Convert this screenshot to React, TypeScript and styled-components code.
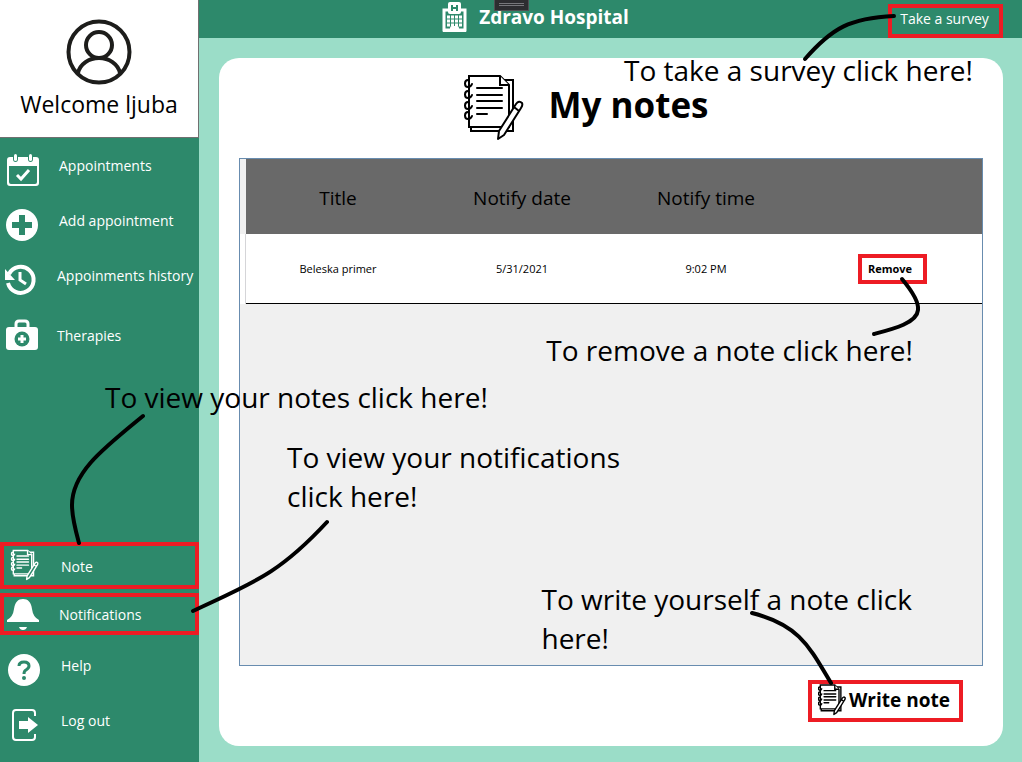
import React from 'react';
import styled, { createGlobalStyle, css } from 'styled-components';

const GREEN = '#2d896b';
const MINT = '#9bddc8';
const RED = '#ed1c24';

const GlobalStyle = createGlobalStyle`
  *, *::before, *::after { box-sizing: border-box; }
  body {
    margin: 0;
    background: ${MINT};
    color: #000;
    font-family: "Segoe UI", "Open Sans", "Noto Sans", sans-serif;
    font-size: 14px;
  }
  button { font: inherit; color: inherit; background: none; cursor: pointer; }
`;

const Page = styled.div`
  position: relative;
  display: grid;
  grid-template-columns: 199px 1fr;
  min-height: 100vh;
`;

const Sidebar = styled.aside`
  display: flex;
  flex-direction: column;
  background: ${GREEN};
`;

const Profile = styled.div`
  display: flex;
  flex-direction: column;
  align-items: center;
  height: 138px;
  padding-top: 19px;
  background: #fff;
  border-right: 1px solid #707070;
  border-bottom: 1px solid #707070;
`;

const Welcome = styled.div`
  font-size: 23px;
  line-height: 38px;
`;

const Nav = styled.nav`
  flex: 1;
  display: flex;
  flex-direction: column;
  justify-content: space-between;
  padding-bottom: 14px;
`;

const NavGroup = styled.div<{ $gap?: number }>`
  display: flex;
  flex-direction: column;
  gap: ${(p) => p.$gap ?? 0}px;
`;

const NavItem = styled.a<{ $inset: number; $height?: number; $marked?: boolean }>`
  display: flex;
  align-items: center;
  gap: ${(p) => p.$inset - 44}px;
  height: ${(p) => p.$height ?? 55}px;
  color: #fff;
  line-height: 20px;
  white-space: nowrap;
  text-decoration: none;
  ${(p) =>
    p.$marked &&
    css`
      padding-top: 2px;
      border: 4px solid ${RED};
      svg { margin-left: -4px; }
    `}
`;

const Main = styled.div`
  display: flex;
  flex-direction: column;
  min-width: 0;
`;

const Header = styled.header`
  display: flex;
  align-items: flex-end;
  height: 38px;
  padding-right: 19px;
  background: ${GREEN};
  color: #fff;
`;

const Brand = styled.div`
  flex: 1;
  display: flex;
  align-items: center;
  justify-content: center;
  gap: 12px;
  height: 38px;
  padding: 0 16px 4px 0;
  font-size: 19px;
  line-height: 26px;
  font-weight: 700;
`;

const BrandName = styled.span`
  position: relative;
`;

const DebugTab = styled.span`
  position: absolute;
  top: -4px;
  left: 15px;
  width: 35px;
  height: 11px;
  background: #2d2d30;
  border: 1px solid #505054;
  border-top: 0;
  &::after {
    content: "";
    position: absolute;
    inset: 3px 4px 4px;
    border-top: 1px solid #77777b;
    border-bottom: 1px solid #77777b;
  }
`;

const SurveyButton = styled.button`
  width: 115px;
  height: 34px;
  padding: 0 2px 6px 0;
  border: 4px solid ${RED};
`;

const Card = styled.main`
  flex: 1;
  display: flex;
  flex-direction: column;
  margin: 20px 19px 16px 20px;
  padding: 0 20px 24px;
  background: #fff;
  border-radius: 20px;
`;

const TitleBar = styled.div`
  display: flex;
  align-items: center;
  justify-content: center;
  gap: 25px;
  height: 100px;
  padding-right: 50px;
`;

const Title = styled.h1`
  margin: 0;
  padding-bottom: 6px;
  font-size: 35px;
  line-height: 48px;
  font-weight: 700;
`;

const NotesPanel = styled.section`
  flex: 1;
  background: #f0f0f0;
  border: 1px solid #688caf;
`;

const NotesTable = styled.table`
  width: 100%;
  table-layout: fixed;
  border-collapse: separate;
  border-spacing: 0;
  text-align: center;
`;

const GutterCol = styled.col`
  width: 6px;
`;

const HeadCell = styled.th`
  height: 75px;
  padding: 2px 0 0;
  background: #696969;
  font-size: 19px;
  font-weight: 400;
`;

const HeadGutter = styled.td`
  padding: 0;
`;

const Cell = styled.td`
  height: 70px;
  padding: 0;
  background: #fff;
  border-bottom: 1px solid #000;
  font-size: 11px;
`;

const Gutter = styled.td`
  padding: 0;
  background: #fff;
  border-right: 1px solid #d5d5d8;
`;

const RemoveButton = styled.button`
  width: 69px;
  height: 30px;
  margin-left: 4px;
  padding: 0 4px 0 0;
  border: 4px solid ${RED};
  font-weight: 700;
`;

const Actions = styled.div`
  display: flex;
  justify-content: flex-end;
  padding: 14px 20px 0 0;
`;

const WriteButton = styled.button`
  display: flex;
  align-items: center;
  gap: 3px;
  width: 155px;
  height: 42px;
  padding: 0 0 2px 6px;
  border: 4px solid ${RED};
  font-size: 19px;
  font-weight: 700;
  white-space: nowrap;
`;

const Arrows = styled.svg<{ $side: 'left' | 'right' }>`
  position: absolute;
  top: 0;
  ${(p) => p.$side}: 0;
  fill: none;
  stroke: #000;
  stroke-width: 4;
  stroke-linecap: round;
  pointer-events: none;
`;

const Callout = styled.p<{ $top: number; $left?: number; $right?: number }>`
  position: absolute;
  top: ${(p) => p.$top}px;
  ${(p) => (p.$left !== undefined ? `left: ${p.$left}px;` : `right: ${p.$right}px;`)}
  margin: 0;
  font-size: 28px;
  line-height: 39px;
  white-space: nowrap;
  pointer-events: none;
`;

function NotepadShape({ paper, width = 2 }: { paper: string; width?: number }) {
  return (
    <g fill={paper} stroke="currentColor" strokeWidth={width}>
      <path d="M7 5H49V56H7Z" />
      <path d="M5 1H36L45 10V52H5Z" />
      <path d="M36 1V10H45" />
      <path
        fill="none"
        strokeLinecap="round"
        d="M13 13H38M13 20H38M13 26H38M13 33H38M13 39H23M4 5C0 5 0 12 4 12Q7 12 8 9M4 16C0 16 0 23 4 23Q7 23 8 20M4 27C0 27 0 34 4 34Q7 34 8 31M4 37C0 37 0 44 4 44Q7 44 8 41"
      />
      <path strokeLinejoin="round" d="M34 64L35 56L52 29Q55 25 58 28Q59 30 57 33L40 60ZM50 32L55 36" />
    </g>
  );
}

function NotepadIcon({ width, height, stroke }: { width: number; height: number; stroke?: number }) {
  return (
    <svg width={width} height={height} viewBox="0 0 60 66" aria-hidden="true">
      <NotepadShape paper="#fff" width={stroke} />
    </svg>
  );
}

function NavIcon({ children }: { children: React.ReactNode }) {
  return (
    <svg width="44" height="44" viewBox="0 0 44 44" fill="#fff" color="#fff" aria-hidden="true">
      {children}
    </svg>
  );
}

const CalendarIcon = () => (
  <NavIcon>
    <path
      fillRule="evenodd"
      d="M10 13H13V15Q13 18 15.500 18T18 15V13H28V15Q28 18 30.500 18T33 15V13H36Q39 13 39 16V39Q39 42 36 42H10Q7 42 7 39V16Q7 13 10 13ZM9 22V38Q9 40 11 40H35Q37 40 37 38V22Z"
    />
    <rect x="14" y="10" width="3" height="7" rx="1.500" />
    <rect x="29" y="10" width="3" height="7" rx="1.500" />
    <path d="M17 31L21 35L29 26" fill="none" stroke="#fff" strokeWidth="3" />
  </NavIcon>
);

const PlusIcon = () => (
  <NavIcon>
    <circle cx="22" cy="26" r="16" />
    <path d="M22 16V36M12 26H32" stroke={GREEN} strokeWidth="6" />
  </NavIcon>
);

const HistoryIcon = () => (
  <NavIcon>
    <path d="M9 20A13 13 0 1 1 8 29" fill="none" stroke="#fff" strokeWidth="4" />
    <path d="M5 15V26H15Z" />
    <path d="M20 18V26L26 30" fill="none" stroke="#fff" strokeWidth="3" />
  </NavIcon>
);

const KitIcon = () => (
  <NavIcon>
    <path d="M16 14V10Q16 7 19 7H25Q28 7 28 10V14" fill="none" stroke="#fff" strokeWidth="3" />
    <rect x="6" y="13" width="32" height="23" rx="3" />
    <circle cx="22" cy="25" r="7.500" fill={GREEN} />
    <path d="M22 21V29M18 25H26" stroke="#fff" strokeWidth="3" />
  </NavIcon>
);

const NoteIcon = () => (
  <NavIcon>
    <g transform="translate(11 5) scale(.46)">
      <NotepadShape paper={GREEN} width={3} />
    </g>
  </NavIcon>
);

const BellIcon = () => (
  <NavIcon>
    <path d="M7 29V27Q13 24 14 16C15 9 18 6 23 6S31 9 32 16Q33 24 39 27V29ZM19 34H27Q26 37 23 37T19 34Z" />
  </NavIcon>
);

const HelpIcon = () => (
  <NavIcon>
    <circle cx="24" cy="26" r="16" />
    <path d="M19 22Q19 18 24 18T29 22Q29 24 26 26Q24 27 24 30" fill="none" stroke={GREEN} strokeWidth="3" />
    <circle cx="24" cy="34" r="2" fill={GREEN} />
  </NavIcon>
);

const LogoutIcon = () => (
  <NavIcon>
    <path d="M35 17V14Q35 11 32 11H16Q13 11 13 14V38Q13 41 16 41H32Q35 41 35 38V35" fill="none" stroke="#fff" strokeWidth="2" />
    <path d="M19 22H28V18L38 26L28 34V30H19Z" />
  </NavIcon>
);

function HospitalIcon() {
  return (
    <svg width="25" height="31" viewBox="0 0 25 31" fill="#fff" aria-hidden="true">
      <rect x="6" y="0" width="13" height="12" rx="2" />
      <path d="M10 3V9M15 3V9M10 6H15" stroke={GREEN} strokeWidth="2" />
      <path d="M7 8H2V28H23V8H18" fill="none" stroke="#fff" strokeWidth="3" />
      <path d="M5 15H21M5 19H21M5 23H21" stroke="#fff" strokeWidth="3" strokeDasharray="3 1" />
      <path d="M8 30V26Q8 24 10 24H15Q17 24 17 26V30Z" />
      <path d="M1 28H9V30H1ZM16 28H24V30H16Z" />
    </svg>
  );
}

function UserIcon() {
  return (
    <svg width="66" height="66" viewBox="0 0 66 66" fill="none" stroke="#1d1d1b" strokeWidth="4" aria-hidden="true">
      <circle cx="33" cy="33" r="30.500" />
      <circle cx="33" cy="26" r="13" />
      <path d="M12 54C14 45 23 39 33 39S52 45 54 54" />
    </svg>
  );
}

const notes = [{ title: 'Beleska primer', date: '5/31/2021', time: '9:02 PM' }];

export default function App() {
  return (
    <>
      <GlobalStyle />
      <Page>
        <Sidebar>
          <Profile>
            <UserIcon />
            <Welcome>Welcome ljuba</Welcome>
          </Profile>
          <Nav>
            <NavGroup>
              <NavItem href="#appointments" $inset={59}><CalendarIcon />Appointments</NavItem>
              <NavItem href="#add" $inset={59}><PlusIcon />Add appointment</NavItem>
              <NavItem href="#history" $inset={57}><HistoryIcon />Appoinments history</NavItem>
              <NavItem href="#therapies" $inset={57} $height={65}><KitIcon />Therapies</NavItem>
            </NavGroup>
            <NavGroup $gap={4}>
              <NavItem href="#notes" $inset={61} $height={47} $marked><NoteIcon />Note</NavItem>
              <NavItem href="#notifications" $inset={59} $height={42} $marked><BellIcon />Notifications</NavItem>
              <NavGroup>
                <NavItem href="#help" $inset={61} $height={54}><HelpIcon />Help</NavItem>
                <NavItem href="#logout" $inset={61}><LogoutIcon />Log out</NavItem>
              </NavGroup>
            </NavGroup>
          </Nav>
        </Sidebar>

        <Main>
          <Header>
            <Brand>
              <HospitalIcon />
              <BrandName>
                Zdravo Hospital
                <DebugTab />
              </BrandName>
            </Brand>
            <SurveyButton type="button">Take a survey</SurveyButton>
          </Header>

          <Card>
            <TitleBar>
              <NotepadIcon width={60} height={66} stroke={2} />
              <Title>My notes</Title>
            </TitleBar>
            <NotesPanel>
              <NotesTable>
                <colgroup>
                  <GutterCol />
                  <col />
                  <col />
                  <col />
                  <col />
                </colgroup>
                <thead>
                  <tr>
                    <HeadGutter />
                    <HeadCell scope="col">Title</HeadCell>
                    <HeadCell scope="col">Notify date</HeadCell>
                    <HeadCell scope="col">Notify time</HeadCell>
                    <HeadCell scope="col" aria-label="Actions" />
                  </tr>
                </thead>
                <tbody>
                  {notes.map((note) => (
                    <tr key={note.title}>
                      <Gutter />
                      <Cell>{note.title}</Cell>
                      <Cell>{note.date}</Cell>
                      <Cell>{note.time}</Cell>
                      <Cell><RemoveButton type="button">Remove</RemoveButton></Cell>
                    </tr>
                  ))}
                </tbody>
              </NotesTable>
            </NotesPanel>
            <Actions>
              <WriteButton type="button">
                <NotepadIcon width={28} height={32} stroke={3} />
                Write note
              </WriteButton>
            </Actions>
          </Card>
        </Main>

        <Arrows $side="left" width="340" height="762" viewBox="0 0 340 762" aria-hidden="true">
          <path d="M143 416C104 448 72 472 72 505C72 518 76 532 79 543" />
          <path d="M327 522C278 575 252 583 193 611" />
        </Arrows>
        <Arrows $side="right" width="282" height="762" viewBox="740 0 282 762" aria-hidden="true">
          <path d="M894 16C850 18 832 28 805 59" />
          <path d="M902 279C912 291 919 303 918 310C917 323 893 329 874 334" />
          <path d="M752 613C800 625 810 648 831 683" />
        </Arrows>
        <Callout $top={51} $right={49}>To take a survey click here!</Callout>
        <Callout $top={331} $right={109}>To remove a note click here!</Callout>
        <Callout $top={378} $left={105}>To view your notes click here!</Callout>
        <Callout $top={438} $left={287}>To view your notifications<br />click here!</Callout>
        <Callout $top={580} $right={110}>To write yourself a note click<br />here!</Callout>
      </Page>
    </>
  );
}
